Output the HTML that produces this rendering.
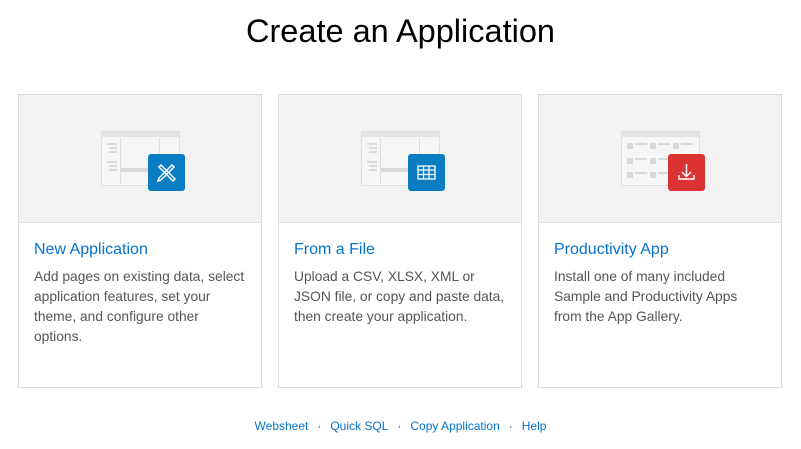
<!DOCTYPE html>
<html><head><style>
body{margin:0;width:801px;height:449px;background:#fff;font-family:"Liberation Sans",sans-serif;position:relative;overflow:hidden}
h1{position:absolute;top:11px;left:0;width:801px;text-align:center;margin:0;font-size:32.5px;font-weight:normal;color:#000;line-height:40px}
.card{position:absolute;top:94px;width:242px;height:292px;border:1px solid #dcdcdc;background:#fff}
.img{height:127px;background:#f2f2f2;border-bottom:1px solid #e2e2e2;position:relative}
.card h2{margin:0;position:absolute;top:146px;left:15px;font-size:16px;font-weight:normal;color:#0572ce}
.card p{margin:0;position:absolute;top:172px;left:15px;width:212px;font-size:13.8px;line-height:20px;color:#555}
.wf{position:absolute;left:82px;top:36px;width:77px;height:53px;border:1px solid #dfdfdf;background:#f6f6f6}
.badge{position:absolute;left:129px;top:59px;width:37px;height:37px;border-radius:3px}
.foot{position:absolute;top:419px;left:0;width:801px;text-align:center;font-size:12px;color:#0572ce}
.foot span.d{color:#333;margin:0 9px}
.l{position:absolute;height:2px;background:#dadada}
.sq{position:absolute;width:6px;height:6px;background:#d8d8d8}
</style></head><body>
<h1>Create an Application</h1>
<div class="card" style="left:18px"><div class="img">
<div class="wf"><div style="height:5px;background:#e4e4e4"></div><div style="position:absolute;left:18px;top:6px;width:1px;height:46px;background:#ddd"></div><div style="position:absolute;left:57px;top:6px;width:1px;height:46px;background:#ddd"></div>
<div class="l" style="left:5px;top:11px;width:10px"></div><div class="l" style="left:7px;top:15px;width:8px"></div><div class="l" style="left:7px;top:19px;width:8px"></div><div class="l" style="left:5px;top:29px;width:10px"></div><div class="l" style="left:7px;top:33px;width:8px"></div><div class="l" style="left:7px;top:37px;width:8px"></div><div class="l" style="left:19px;top:36px;width:38px;height:4px"></div></div>
<div class="badge" style="background:#0a7cc1"><svg width="37" height="37" viewBox="0 0 37 37" fill="none" stroke="#fff" stroke-width="1.5"><path d="M11 13l2-2 14 14-2 2z"/><path d="M24 11l2 2-13 13-3 1 1-3z"/></svg></div></div>
<h2>New Application</h2><p>Add pages on existing data, select application features, set your theme, and configure other options.</p></div>
<div class="card" style="left:278px"><div class="img">
<div class="wf"><div style="height:5px;background:#e4e4e4"></div><div style="position:absolute;left:18px;top:6px;width:1px;height:46px;background:#ddd"></div><div style="position:absolute;left:57px;top:6px;width:1px;height:46px;background:#ddd"></div>
<div class="l" style="left:5px;top:11px;width:10px"></div><div class="l" style="left:7px;top:15px;width:8px"></div><div class="l" style="left:7px;top:19px;width:8px"></div><div class="l" style="left:5px;top:29px;width:10px"></div><div class="l" style="left:7px;top:33px;width:8px"></div><div class="l" style="left:7px;top:37px;width:8px"></div><div class="l" style="left:19px;top:36px;width:38px;height:4px"></div></div>
<div class="badge" style="background:#0a7cc1"><svg width="37" height="37" viewBox="0 0 37 37" fill="none" stroke="#fff" stroke-width="1.3"><rect x="10" y="12" width="17" height="13"/><path d="M10 16h17M10 20.5h17M15.5 12v13M21 12v13"/></svg></div></div>
<h2>From a File</h2><p>Upload a CSV, XLSX, XML or JSON file, or copy and paste data, then create your application.</p></div>
<div class="card" style="left:538px"><div class="img">
<div class="wf"><div style="height:5px;background:#e4e4e4"></div>
<div class="sq" style="left:5px;top:11px"></div><div class="l" style="left:13px;top:11px;width:12px"></div><div class="sq" style="left:28px;top:11px"></div><div class="l" style="left:36px;top:11px;width:12px"></div><div class="sq" style="left:51px;top:11px"></div><div class="l" style="left:59px;top:11px;width:12px"></div>
<div class="sq" style="left:5px;top:26px"></div><div class="l" style="left:13px;top:26px;width:12px"></div><div class="sq" style="left:28px;top:26px"></div><div class="l" style="left:36px;top:26px;width:12px"></div>
<div class="sq" style="left:5px;top:40px"></div><div class="l" style="left:13px;top:40px;width:12px"></div><div class="sq" style="left:28px;top:40px"></div><div class="l" style="left:36px;top:40px;width:12px"></div></div>
<div class="badge" style="background:#dc3232"><svg width="37" height="37" viewBox="0 0 37 37" fill="none" stroke="#fff" stroke-width="1.5"><path d="M18.5 10v12M14 18l4.5 4.5 4.5-4.5M11 21v4h15v-4"/></svg></div></div>
<h2>Productivity App</h2><p>Install one of many included Sample and Productivity Apps from the App Gallery.</p></div>
<div class="foot">Websheet<span class="d">·</span>Quick SQL<span class="d">·</span>Copy Application<span class="d">·</span>Help</div>
</body></html>
